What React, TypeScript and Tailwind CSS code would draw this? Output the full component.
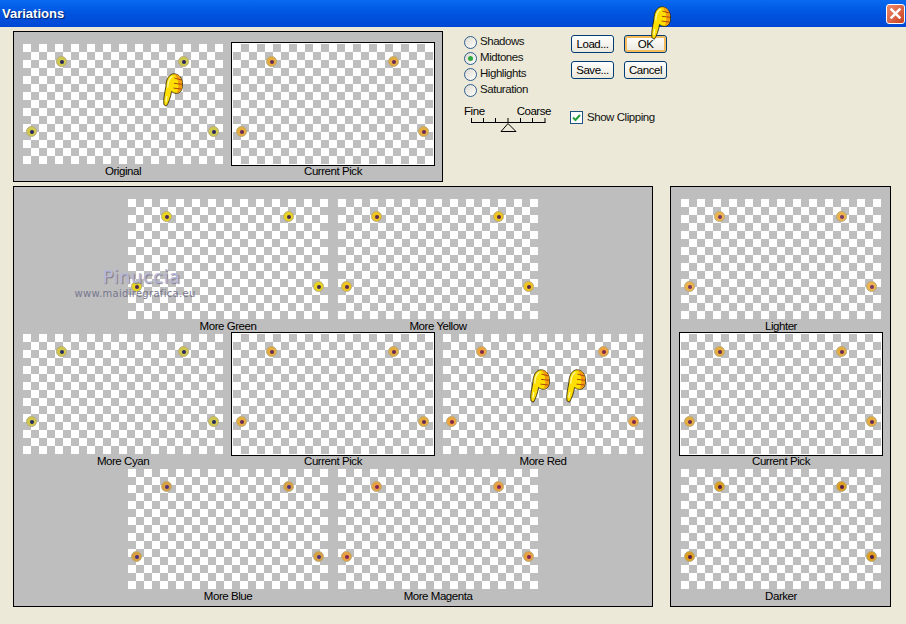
import React from 'react';

const UI_FONT = "font-['Liberation_Sans',Arial,sans-serif]";
const LABEL = 'text-[11.5px] tracking-[-0.45px]';

type Tint = { ring: string; core: string };

const TINTS: Record<string, Tint> = {
  original: { ring: 'bg-[#cfc94e]', core: 'bg-[#2a2660]' },
  pick: { ring: 'bg-[#e6ad3e]', core: 'bg-[#6a2a58]' },
  green: { ring: 'bg-[#e8d522]', core: 'bg-[#4a2a50]' },
  yellow: { ring: 'bg-[#f0c41e]', core: 'bg-[#5a2a4c]' },
  cyan: { ring: 'bg-[#d0c84c]', core: 'bg-[#2a2a64]' },
  red: { ring: 'bg-[#eea53e]', core: 'bg-[#80284c]' },
  blue: { ring: 'bg-[#d8a040]', core: 'bg-[#50307c]' },
  magenta: { ring: 'bg-[#e8a040]', core: 'bg-[#84245a]' },
  lighter: { ring: 'bg-[#ecb44a]', core: 'bg-[#783868]' },
  darker: { ring: 'bg-[#dc9f20]', core: 'bg-[#541c48]' },
};

// Hand cursor: fat fist with the finger pointing down and to the left
const Hand = ({ className }: { className: string }) => (
  <svg viewBox="0 0 21 35" className={`absolute z-10 w-[20px] h-[34px] ${className}`}>
    <path
      d="M1 33C0 28 2 20 3 14C3 6 7 0 12 0.500C17 1 20.500 5 20.500 12C20.500 18 18 21 14 21C11.500 21 10 20 9 19C8 25 6 31 3.500 34.500Z"
      fill="#ffdf00"
      stroke="#1a1200"
      strokeWidth="0.8"
    />
    <path d="M12 1C17 1 20 5 20 12C20 17 18 20.500 14.500 20.500C17 15 17 6 12 1Z" fill="#f29a10" />
    <path d="M12 5L19.500 7M11.500 10.500L20 11.500M11 15.500L19.500 16.500" stroke="#a8400c" strokeWidth="1" fill="none" />
    <path d="M5 15C5 9 7 5 10 3M4 24L3 30" stroke="#fff8a0" strokeWidth="1.400" fill="none" />
  </svg>
);

const Dot = ({ tint, className }: { tint: Tint; className: string }) => (
  <span className={`absolute w-[11px] h-[11px] rounded-full flex items-center justify-center border border-[#b8ac80] ${tint.ring} ${className}`}>
    <span className={`w-[4px] h-[4px] rounded-full ${tint.core}`} />
  </span>
);

const Thumb = ({ label, tint, framed }: { label: string; tint: string; framed?: boolean }) => {
  const t = TINTS[tint];
  return (
    <div className="w-[200px] flex flex-col">
      <div
        className={`relative h-[120px] bg-[repeating-conic-gradient(#bebebe_0_25%,#ffffff_0_50%)] bg-size-[16px_16px] ${
          framed ? 'shadow-[0_0_0_1px_#ffffff,0_0_0_2px_#000000]' : ''
        }`}
      >
        <Dot tint={t} className="left-[33px] top-[12px]" />
        <Dot tint={t} className="left-[155px] top-[12px]" />
        <Dot tint={t} className="left-[3px] top-[82px]" />
        <Dot tint={t} className="left-[185px] top-[82px]" />
      </div>
      <div className={`h-[15px] leading-[15px] text-center text-black ${LABEL}`}>{label}</div>
    </div>
  );
};

const Radio = ({ label, checked }: { label: string; checked?: boolean }) => (
  <label className={`h-[16px] flex items-center gap-[3px] text-[#111] ${LABEL}`}>
    <span className="w-[13px] h-[13px] rounded-full border border-[#2f5f8f] bg-linear-to-br from-[#dcd9cc] to-white flex items-center justify-center">
      {checked && <span className="w-[5px] h-[5px] rounded-full bg-[#2fa83f]" />}
    </span>
    {label}
  </label>
);

const Btn = ({ label, active }: { label: string; active?: boolean }) => (
  <button
    className={`w-[43px] h-[18px] rounded-[3px] border border-[#003c74] bg-linear-to-b from-white to-[#ebe8dc] leading-[14px] text-black ${LABEL} ${
      active ? 'shadow-[inset_0_0_0_2px_#f4bc5c]' : ''
    }`}
  >
    {label}
  </button>
);

export default function App() {
  return (
    <div className={`relative w-[906px] h-[624px] overflow-hidden bg-[#ece9d8] ${UI_FONT}`}>
      {/* Title bar */}
      <div className="h-[27px] flex items-center justify-between pl-[2px] pr-[1px] bg-linear-to-b from-[#0a6af0] via-[#0054e0] to-[#0048d4]">
        <span className="pt-[1px] text-[13px] font-bold text-white [text-shadow:1px_1px_1px_#00206c]">Variations</span>
        <span className="w-[19px] h-[20px] rounded-[3px] border border-white bg-linear-to-br from-[#ee8a6c] to-[#c8401c] flex items-center justify-center">
          <svg viewBox="0 0 12 12" className="w-[13px] h-[13px]">
            <path d="M1.500 1.500L10.500 10.500M10.500 1.500L1.500 10.500" stroke="#ffffff" strokeWidth="2.400" />
          </svg>
        </span>
      </div>

      <div className="pl-[13px] pt-[4px]">
        {/* Top row */}
        <div className="flex h-[151px]">
          <div className="w-[430px] border border-black bg-[#bebebe] pl-[9px] pt-[12px]">
            <div className="flex gap-[10px]">
              <Thumb label="Original" tint="original" />
              <Thumb label="Current Pick" tint="pick" framed />
            </div>
          </div>

          <div className="ml-[21px] pt-[3px]">
            <div className="flex">
              <div className="w-[107px] flex flex-col">
                <Radio label="Shadows" />
                <Radio label="Midtones" checked />
                <Radio label="Highlights" />
                <Radio label="Saturation" />
              </div>
              <div className="grid grid-cols-[43px_43px] gap-x-[10px] gap-y-[8px] pt-[1px] h-fit">
                <Btn label="Load..." />
                <Btn label="OK" active />
                <Btn label="Save..." />
                <Btn label="Cancel" />
              </div>
            </div>

            <div className="flex mt-[7px]">
              <div className="w-[106px]">
                <div className={`w-[87px] h-[13px] leading-[13px] flex justify-between text-black ${LABEL}`}>
                  <span>Fine</span>
                  <span>Coarse</span>
                </div>
                <svg viewBox="0 0 87 14" className="w-[87px] h-[14px]">
                  <path
                    d="M7.500 0V4.500M19.500 0V4.500M31.500 0V4.500M44 0V4.500M56.500 0V4.500M68.500 0V4.500M81 0V4.500M7 4.500H81.500"
                    stroke="#000000"
                    fill="none"
                  />
                  <path d="M44 5.500L37 13.500H52Z" fill="#ece9d8" stroke="#000000" />
                </svg>
              </div>
              <label className={`h-[13px] mt-[6px] flex items-center gap-[4px] text-[#111] ${LABEL}`}>
                <span className="w-[13px] h-[13px] border border-[#1c5180] bg-white flex items-center justify-center">
                  <svg viewBox="0 0 11 11" className="w-[11px] h-[11px]">
                    <path d="M2 5.500L4.500 8L9 3" stroke="#22a13a" strokeWidth="2" fill="none" />
                  </svg>
                </span>
                Show Clipping
              </label>
            </div>
          </div>
        </div>

        {/* Variation panels */}
        <div className="flex gap-[17px] mt-[4px]">
          <div className="w-[640px] h-[421px] border border-black bg-[#bebebe] pl-[9px] pt-[12px]">
            <div className="w-[620px] flex flex-col">
              <div className="flex justify-center gap-[10px]">
                <Thumb label="More Green" tint="green" />
                <Thumb label="More Yellow" tint="yellow" />
              </div>
              <div className="flex justify-center gap-[10px]">
                <Thumb label="More Cyan" tint="cyan" />
                <Thumb label="Current Pick" tint="pick" framed />
                <Thumb label="More Red" tint="red" />
              </div>
              <div className="flex justify-center gap-[10px]">
                <Thumb label="More Blue" tint="blue" />
                <Thumb label="More Magenta" tint="magenta" />
              </div>
            </div>
          </div>

          <div className="w-[221px] h-[421px] border border-black bg-[#bebebe] pl-[10px] pt-[12px]">
            <Thumb label="Lighter" tint="lighter" />
            <Thumb label="Current Pick" tint="pick" framed />
            <Thumb label="Darker" tint="darker" />
          </div>
        </div>
      </div>

      {/* Hand cursors lying over the dialog */}
      <Hand className="left-[163px] top-[73px]" />
      <Hand className="left-[651px] top-[6px]" />
      <Hand className="left-[530px] top-[369px]" />
      <Hand className="left-[566px] top-[369px]" />

      {/* Watermark */}
      <div className="absolute left-[74px] top-[266px] w-[122px] flex flex-col items-center z-10">
        <span className="ml-[13px] font-['DejaVu_Sans',sans-serif] text-[18px] leading-[22px] tracking-[0.5px] text-[#b8b8d8] [text-shadow:1px_1px_1px_#77778a]">
          Pinuccia
        </span>
        <span className="font-['DejaVu_Sans',sans-serif] text-[10px] leading-[12px] tracking-[0.3px] text-[#77778f]">
          www.maidiregrafica.eu
        </span>
      </div>
    </div>
  );
}
